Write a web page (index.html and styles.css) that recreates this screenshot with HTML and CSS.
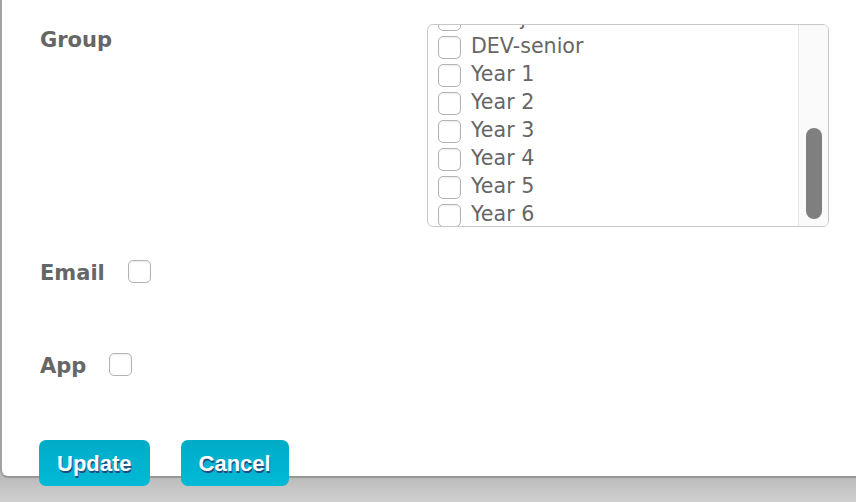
FILE: index.html
```html
<!DOCTYPE html>
<html lang="en">
<head>
  <meta charset="UTF-8">
  <title>Edit Notification</title>
  <link rel="stylesheet" href="styles.css">
</head>
<body>

  <div class="panel">
    <div class="field field-group">
      <label class="field-label">Group</label>
      <div class="group-list">
        <div class="group-items" id="groupItems">
          <label class="group-item"><input type="checkbox"> DEV-junior</label>
          <label class="group-item"><input type="checkbox"> DEV-senior</label>
          <label class="group-item"><input type="checkbox"> Year 1</label>
          <label class="group-item"><input type="checkbox"> Year 2</label>
          <label class="group-item"><input type="checkbox"> Year 3</label>
          <label class="group-item"><input type="checkbox"> Year 4</label>
          <label class="group-item"><input type="checkbox"> Year 5</label>
          <label class="group-item"><input type="checkbox"> Year 6</label>
        </div>
        <div class="scroll-track">
          <div class="scroll-thumb"></div>
        </div>
      </div>
    </div>

    <div class="field field-check">
      <label class="field-label" for="sendEmail">Email</label>
      <input type="checkbox" id="sendEmail" class="big-check">
    </div>

    <div class="field field-check field-last">
      <label class="field-label" for="sendApp">App</label>
      <input type="checkbox" id="sendApp" class="big-check">
    </div>

    <div class="actions">
      <button class="btn">Update</button>
      <button class="btn">Cancel</button>
    </div>
  </div>

  <script>
    // list opens scrolled near the end
    var items = document.getElementById('groupItems');
    items.scrollTop = items.scrollHeight - items.clientHeight - 2;
  </script>
</body>
</html>
```

FILE: styles.css
```css
html, body {
  height: 100%;
}
body {
  margin: 0;
  font-family: "DejaVu Sans", Verdana, sans-serif;
  color: #666;
  background: linear-gradient(#bcbcbc 478px, #d0d0d0 100%);
  overflow: hidden;
}
.panel {
  background: #fff;
  border-left: 2px solid #a3a3a3;
  border-bottom: 2px solid #979797;
  border-bottom-left-radius: 8px;
  padding: 23px 0 0 38px;
}
.field {
  display: flex;
  align-items: flex-start;
  margin-bottom: 32px;
}
.field-label {
  font-size: 21px;
  font-weight: bold;
  line-height: 28px;
  color: #666;
}
.field-group .field-label {
  width: 387px;
  flex-shrink: 0;
  margin-top: 3px;
}
.field-check {
  height: 61px;
}
.field-last {
  margin-bottom: 27px;
}
.group-list {
  display: flex;
  width: 400px;
  height: 201px;
  margin-top: 1px;
  border: 1px solid #c8c8c8;
  border-radius: 6px;
  overflow: hidden;
}
.group-items {
  flex: 1;
  overflow: hidden;
}
.scroll-track {
  width: 29px;
  background: #fafafa;
  border-left: 1px solid #e6e6e6;
}
.scroll-thumb {
  width: 16px;
  height: 91px;
  margin: 103px 0 0 7px;
  background: #7f7f7f;
  border-radius: 8px;
}
.group-item {
  display: flex;
  align-items: flex-start;
  height: 28px;
  padding-left: 10px;
  font-size: 20.6px;
  line-height: 28px;
  color: #666;
  white-space: nowrap;
}
.group-item input {
  margin: 4px 10px 0 0;
}
input[type="checkbox"] {
  appearance: none;
  -webkit-appearance: none;
  width: 23px;
  height: 23px;
  border: 1px solid #b3b3b3;
  border-radius: 5px;
  background: #fff;
  box-shadow: inset 0 1px 2px rgba(0,0,0,0.08);
  flex-shrink: 0;
}
.big-check {
  margin: 1px 0 0 23px;
  border-radius: 6px;
}
.actions {
  display: flex;
  gap: 31px;
  margin-left: -1px;
  margin-bottom: -10px;
}
.btn {
  height: 46px;
  padding: 2px 18px 0;
  border: none;
  border-radius: 7px;
  background: linear-gradient(#00acc8, #00b9d6);
  color: #fff;
  font-family: "Liberation Sans", Arial, sans-serif;
  font-size: 22px;
  font-weight: bold;
  text-shadow: 1px 2px 0 #1f4f80;
}
```
